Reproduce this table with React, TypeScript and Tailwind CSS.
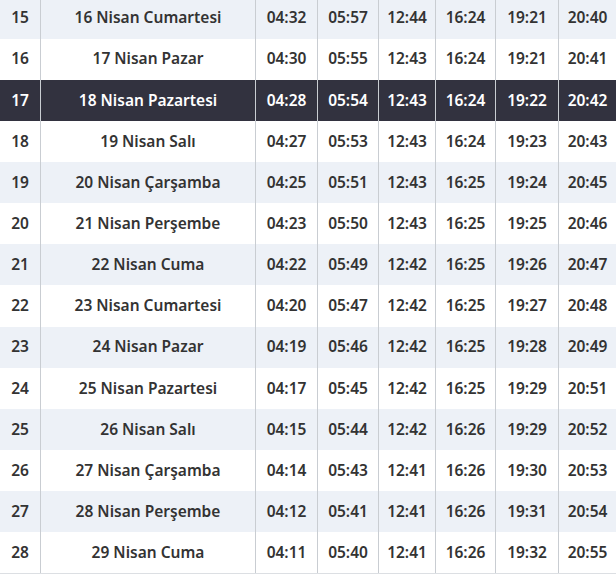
const rows: string[][] = [
  ["15", "16 Nisan Cumartesi", "04:32", "05:57", "12:44", "16:24", "19:21", "20:40"],
  ["16", "17 Nisan Pazar", "04:30", "05:55", "12:43", "16:24", "19:21", "20:41"],
  ["17", "18 Nisan Pazartesi", "04:28", "05:54", "12:43", "16:24", "19:22", "20:42"],
  ["18", "19 Nisan Salı", "04:27", "05:53", "12:43", "16:24", "19:23", "20:43"],
  ["19", "20 Nisan Çarşamba", "04:25", "05:51", "12:43", "16:25", "19:24", "20:45"],
  ["20", "21 Nisan Perşembe", "04:23", "05:50", "12:43", "16:25", "19:25", "20:46"],
  ["21", "22 Nisan Cuma", "04:22", "05:49", "12:42", "16:25", "19:26", "20:47"],
  ["22", "23 Nisan Cumartesi", "04:20", "05:47", "12:42", "16:25", "19:27", "20:48"],
  ["23", "24 Nisan Pazar", "04:19", "05:46", "12:42", "16:25", "19:28", "20:49"],
  ["24", "25 Nisan Pazartesi", "04:17", "05:45", "12:42", "16:25", "19:29", "20:51"],
  ["25", "26 Nisan Salı", "04:15", "05:44", "12:42", "16:26", "19:29", "20:52"],
  ["26", "27 Nisan Çarşamba", "04:14", "05:43", "12:41", "16:26", "19:30", "20:53"],
  ["27", "28 Nisan Perşembe", "04:12", "05:41", "12:41", "16:26", "19:31", "20:54"],
  ["28", "29 Nisan Cuma", "04:11", "05:40", "12:41", "16:26", "19:32", "20:55"],
];

const today = "17";

export default function App() {
  return (
    <div className="h-[576px] w-[616px] overflow-hidden bg-white font-['Noto_Sans',sans-serif]">
      <div className="-mt-[2.6px] border-b border-[#dcdfe3]">
        {rows.map((r, i) => {
          const active = r[0] === today;
          const striped = i % 2 === 0;
          const rowClass = active
            ? "bg-[#32323f] text-white"
            : striped
              ? "bg-[#edf1f7] text-[#333333]"
              : "bg-white text-[#333333]";
          return (
            <div
              key={r[0]}
              className={`grid h-[41.15px] grid-cols-[41px_215px_62px_61px_57px_60px_63px_57px] text-[15.5px] font-semibold ${rowClass}`}
            >
              {r.map((c, j) => (
                <div
                  key={j}
                  className={`flex items-center justify-center ${j < 7 ? "border-r border-[#c9cdd2]" : ""}`}
                >
                  {c}
                </div>
              ))}
            </div>
          );
        })}
      </div>
    </div>
  );
}
